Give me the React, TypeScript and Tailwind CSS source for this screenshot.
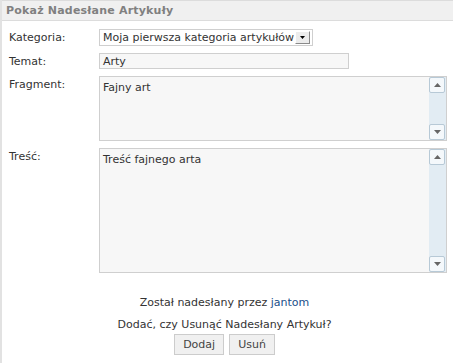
const font = "font-['DejaVu_Sans',Verdana,sans-serif]";

const ScrollArrow = ({ up }: { up?: boolean }) => (
  <div className="w-[16px] h-[16px] bg-[#f4f8fb] border border-[#b7c9d6] rounded-[2px] flex items-center justify-center">
    <svg width="7" height="4" viewBox="0 0 7 4">
      {up ? <path d="M0 4 L3.5 0 L7 4 Z" fill="#666" /> : <path d="M0 0 L3.5 4 L7 0 Z" fill="#666" />}
    </svg>
  </div>
);

const TextBox = ({ text, height }: { text: string; height: string }) => (
  <div className={`flex flex-1 border border-[#cfcfcf] bg-[#f7f7f7] ${height}`}>
    <div className="flex-1 px-[3px] py-[4px] text-[#333]">{text}</div>
    <div className="w-[17px] flex flex-col bg-[#e2ecf3]">
      <ScrollArrow up />
      <div className="flex-1" />
      <ScrollArrow />
    </div>
  </div>
);

export default function App() {
  return (
    <div className={`w-[453px] h-[363px] bg-white ${font} text-[11px] leading-[13px] text-[#333] border-l-2 border-[#e2e2e2]`}>
      <div className="h-[21px] bg-[#f0f0f0] border-b border-t border-[#dcdcdc] flex items-center px-[4px]">
        <span className="font-bold text-[#808080] text-[11px] tracking-[0.2px]">Pokaż Nadesłane Artykuły</span>
      </div>

      <div className="pl-[7px] pr-[6px] pt-[8px] flex flex-col gap-[7px]">
        <div className="flex items-center">
          <div className="w-[90px]">Kategoria:</div>
          <div className="w-[214px] h-[17px] border border-[#cfcfcf] flex items-center justify-between pl-[3px] pr-[2px]">
            <span>Moja pierwsza kategoria artykułów</span>
            <div className="w-[15px] h-[13px] bg-[#ececec] border border-[#8a8a8a] border-t-white border-l-white flex items-center justify-center">
              <svg width="5" height="3" viewBox="0 0 5 3"><path d="M0 0 L2.5 3 L5 0 Z" fill="#000" /></svg>
            </div>
          </div>
        </div>

        <div className="flex items-center">
          <div className="w-[90px]">Temat:</div>
          <div className="w-[250px] h-[16px] border border-[#cfcfcf] bg-[#f7f7f7] flex items-center px-[3px]">Arty</div>
        </div>

        <div className="flex">
          <div className="w-[90px] pt-[2px]">Fragment:</div>
          <TextBox text="Fajny art" height="h-[65px]" />
        </div>

        <div className="flex">
          <div className="w-[90px] pt-[2px]">Treść:</div>
          <TextBox text="Treść fajnego arta" height="h-[125px]" />
        </div>
      </div>

      <div className="flex flex-col items-center pt-[23px] pr-[6px]">
        <div>Został nadesłany przez <span className="text-[#1a4f8a]">jantom</span></div>
        <div className="mt-[9px]">Dodać, czy Usunąć Nadesłany Artykuł?</div>
        <div className="flex gap-[5px] mt-[3px]">
          <button className="h-[21px] px-[8px] bg-[#f0f0f0] border border-[#cccccc] text-[#444]">Dodaj</button>
          <button className="h-[21px] px-[8px] bg-[#f0f0f0] border border-[#cccccc] text-[#444]">Usuń</button>
        </div>
      </div>
    </div>
  );
}
